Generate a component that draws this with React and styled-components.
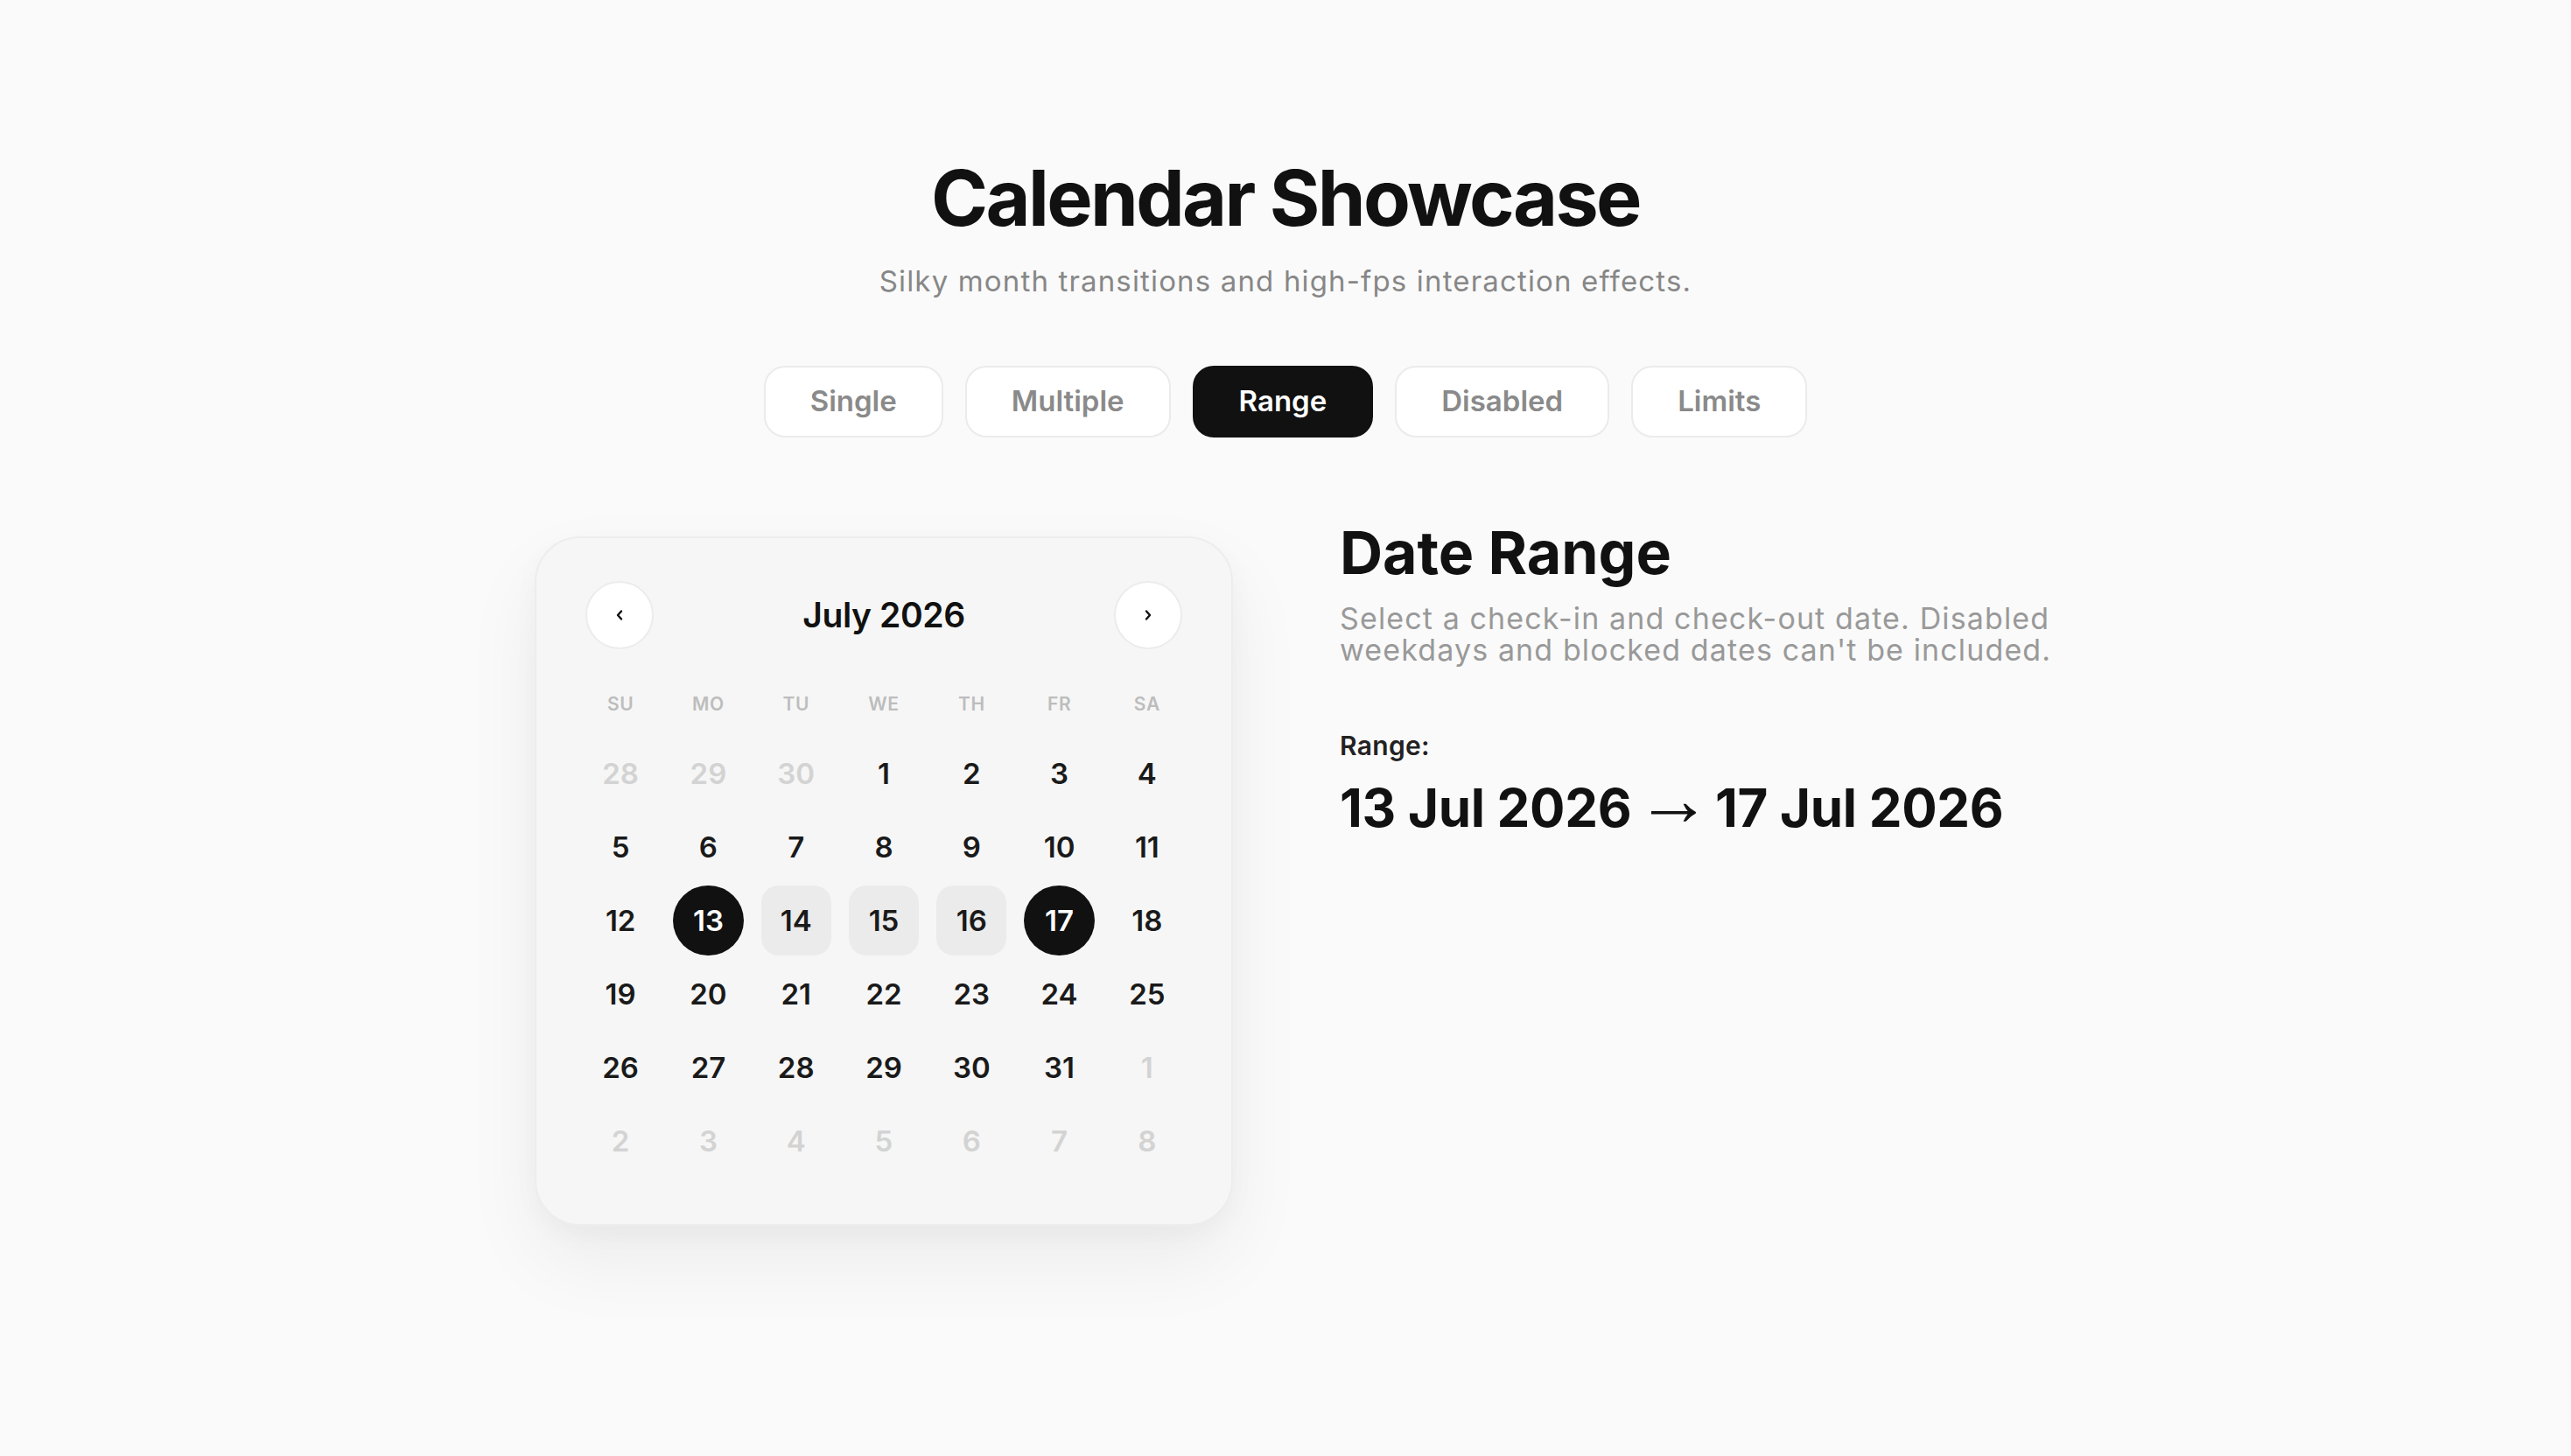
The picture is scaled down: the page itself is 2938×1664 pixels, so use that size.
import React from "react";
import styled, { createGlobalStyle } from "styled-components";

const Global = createGlobalStyle`
  html, body { margin: 0; padding: 0; background: #fafafa; }
  body {
    font-family: Inter, "Noto Sans", "Liberation Sans", sans-serif;
    color: #111;
    -webkit-font-smoothing: antialiased;
  }
  * { box-sizing: border-box; }
`;

const Page = styled.div`
  min-height: 1664px;
  display: flex;
  flex-direction: column;
  align-items: center;
  padding-top: 178px;
`;

const Title = styled.h1`
  margin: 0;
  font-size: 88px;
  line-height: 1.1;
  font-weight: 700;
  letter-spacing: -0.03em;
  color: #111;
`;

const Subtitle = styled.p`
  margin: 23px 0 0;
  font-size: 33px;
  line-height: 1.4;
  font-weight: 400;
  letter-spacing: 0.035em;
  color: #878787;
`;

const Tabs = styled.div`
  display: flex;
  gap: 25px;
  margin-top: 74px;
`;

const Tab = styled.button`
  height: 82px;
  padding: 0 51px;
  border-radius: 24px;
  border: 2px solid ${(p) => (p.$active ? "#111" : "#ebebeb")};
  background: ${(p) => (p.$active ? "#111" : "#fff")};
  color: ${(p) => (p.$active ? "#fff" : "#8a8a8a")};
  font-family: inherit;
  font-size: 33px;
  font-weight: 600;
  line-height: 1;
  display: inline-flex;
  align-items: center;
  justify-content: center;
  cursor: pointer;
`;

const Main = styled.div`
  display: flex;
  align-items: flex-start;
  gap: 122px;
  margin-top: 91px;
`;

const Card = styled.div`
  width: 798px;
  margin-top: 22px;
  padding: 49px 56px 55px;
  border: 2px solid #ededed;
  border-radius: 52px;
  background: #f6f6f6;
  box-shadow: 0 40px 90px rgba(0, 0, 0, 0.06), 0 10px 30px rgba(0, 0, 0, 0.03);
`;

const Header = styled.div`
  display: flex;
  align-items: center;
  justify-content: space-between;
  height: 78px;
`;

const NavButton = styled.button`
  width: 78px;
  height: 78px;
  border-radius: 50%;
  border: 2px solid #ececec;
  background: #fff;
  display: flex;
  align-items: center;
  justify-content: center;
  padding: 0;
  cursor: pointer;
  color: #111;
`;

const Month = styled.div`
  font-size: 39px;
  font-weight: 600;
  letter-spacing: -0.01em;
  color: #111;
`;

const WeekRow = styled.div`
  display: grid;
  grid-template-columns: repeat(7, 1fr);
  column-gap: 20px;
  height: 30px;
  margin-top: 48px;
`;

const WeekDay = styled.div`
  display: flex;
  align-items: center;
  justify-content: center;
  font-size: 21px;
  font-weight: 600;
  letter-spacing: 0.03em;
  color: #bdbdbd;
`;

const Grid = styled.div`
  display: grid;
  grid-template-columns: repeat(7, 1fr);
  column-gap: 20px;
  row-gap: 4px;
  margin-top: 24px;
`;

const Day = styled.div`
  height: 80px;
  display: flex;
  align-items: center;
  justify-content: center;
  font-size: 33px;
  font-weight: 600;
  border-radius: ${(p) => (p.$kind === "edge" ? "50%" : "20px")};
  background: ${(p) =>
    p.$kind === "edge" ? "#111" : p.$kind === "mid" ? "#ebebeb" : "transparent"};
  color: ${(p) =>
    p.$kind === "edge" ? "#fff" : p.$muted ? "#d3d3d3" : "#1a1a1a"};
`;

const Panel = styled.div`
  width: 796px;
`;

const PanelTitle = styled.h2`
  margin: 0;
  font-size: 68px;
  line-height: 1.2;
  font-weight: 700;
  letter-spacing: 0;
  color: #111;
`;

const Description = styled.p`
  margin: 16px 0 0;
  width: 860px;
  font-size: 34px;
  line-height: 36px;
  font-weight: 400;
  letter-spacing: 0.033em;
  color: #999;
`;

const Label = styled.div`
  margin-top: 73px;
  font-size: 30px;
  line-height: 1.2;
  font-weight: 600;
  letter-spacing: 0.01em;
  color: #222;
`;

const Value = styled.div`
  margin-top: 17px;
  font-size: 60px;
  line-height: 1.2;
  font-weight: 700;
  letter-spacing: -0.005em;
  color: #111;
  white-space: nowrap;
`;

const Arrow = styled.span`
  font-family: "Liberation Sans", "DejaVu Sans", sans-serif;
  font-weight: 400;
  font-size: 86px;
  line-height: 0;
  vertical-align: 2px;
  margin: 0 -9px;
`;

const Chevron = ({ dir }) => (
  <svg width="10" height="14" viewBox="0 0 10 14" fill="none">
    <path
      d={dir === "left" ? "M7 2.5 L3 7 L7 11.5" : "M3 2.5 L7 7 L3 11.5"}
      stroke="currentColor"
      strokeWidth="2.4"
      strokeLinecap="round"
      strokeLinejoin="round"
    />
  </svg>
);

const tabs = ["Single", "Multiple", "Range", "Disabled", "Limits"];
const weekdays = ["SU", "MO", "TU", "WE", "TH", "FR", "SA"];

const days = [];
[28, 29, 30].forEach((d) => days.push({ d, muted: true }));
for (let d = 1; d <= 31; d++) days.push({ d, muted: false });
for (let d = 1; d <= 8; d++) days.push({ d, muted: true });

const kindOf = (item) => {
  if (item.muted) return "none";
  if (item.d === 13 || item.d === 17) return "edge";
  if (item.d > 13 && item.d < 17) return "mid";
  return "none";
};

export default function App() {
  return (
    <>
      <Global />
      <Page>
        <Title>Calendar Showcase</Title>
        <Subtitle>Silky month transitions and high-fps interaction effects.</Subtitle>
        <Tabs>
          {tabs.map((t) => (
            <Tab key={t} $active={t === "Range"}>
              {t}
            </Tab>
          ))}
        </Tabs>
        <Main>
          <Card>
            <Header>
              <NavButton aria-label="Previous month">
                <Chevron dir="left" />
              </NavButton>
              <Month>July 2026</Month>
              <NavButton aria-label="Next month">
                <Chevron dir="right" />
              </NavButton>
            </Header>
            <WeekRow>
              {weekdays.map((w) => (
                <WeekDay key={w}>{w}</WeekDay>
              ))}
            </WeekRow>
            <Grid>
              {days.map((item, i) => (
                <Day key={i} $muted={item.muted} $kind={kindOf(item)}>
                  {item.d}
                </Day>
              ))}
            </Grid>
          </Card>
          <Panel>
            <PanelTitle>Date Range</PanelTitle>
            <Description>
              Select a check-in and check-out date. Disabled weekdays and blocked
              dates can't be included.
            </Description>
            <Label>Range:</Label>
            <Value>
              13 Jul 2026 <Arrow>→</Arrow> 17 Jul 2026
            </Value>
          </Panel>
        </Main>
      </Page>
    </>
  );
}
